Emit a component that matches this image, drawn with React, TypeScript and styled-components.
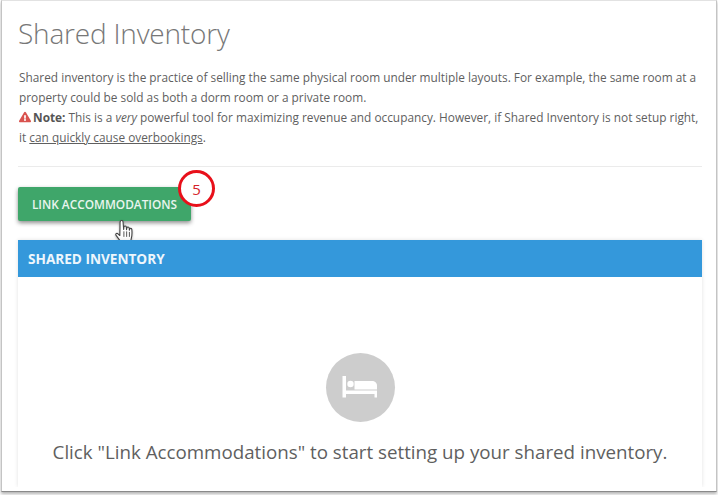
import React from "react";
import styled, { createGlobalStyle } from "styled-components";
import { FaExclamationTriangle } from "react-icons/fa";

const Global = createGlobalStyle`
  html, body { margin: 0; padding: 0; background: #fff; }
  body { font-family: "Open Sans", "Liberation Sans", sans-serif; color: #555; width: 718px; height: 495px; overflow: hidden; }
`;

const Frame = styled.div`
  box-sizing: border-box;
  width: 716px;
  height: 492px;
  margin-left: 1px;
  background: #fff;
  border: 1px solid #c4c4c4;
  border-top-color: #e2e2e2;
  border-bottom: 1px solid #8a8a8a;
  box-shadow: 0 2px 3px rgba(0, 0, 0, 0.3);
  padding: 0 14px 0 16px;
  overflow: hidden;
`;

const Title = styled.h1`
  margin: 11px 0 0 0;
  font-size: 28px;
  line-height: 42px;
  font-weight: 300;
  color: #777;
  letter-spacing: -0.2px;
`;

const Intro = styled.p`
  margin: 13px 0 0 0;
  padding-left: 1px;
  font-size: 11.85px;
  line-height: 20px;
  color: #5f5f5f;
`;

const Warn = styled(FaExclamationTriangle)`
  color: #d9534f;
  font-size: 12px;
  vertical-align: -1px;
  margin-right: 2px;
`;

const Strong = styled.strong`
  font-weight: 700;
  color: #555;
`;

const Underlined = styled.span`
  text-decoration: underline;
`;

const Divider = styled.hr`
  margin: 19px 0 20px 0;
  border: 0;
  border-top: 1px solid #ebebeb;
`;

const ButtonRow = styled.div`
  position: relative;
  height: 34px;
`;

const GreenButton = styled.button`
  box-sizing: border-box;
  width: 173px;
  height: 34px;
  border: 0;
  border-radius: 2px;
  background: #3fa66a;
  color: #e9f5ee;
  font-family: "Open Sans", sans-serif;
  font-size: 11.85px;
  font-weight: 600;
  text-transform: uppercase;
  box-shadow: 0 2px 4px rgba(0, 0, 0, 0.45);
  padding: 0;
`;

const Badge = styled.div`
  position: absolute;
  left: 160px;
  top: -17px;
  box-sizing: border-box;
  width: 37px;
  height: 37px;
  border-radius: 50%;
  border: 3px solid #e8101a;
  background: #fff;
  color: #d5232a;
  font-size: 15px;
  display: flex;
  align-items: center;
  justify-content: center;
`;

const Cursor = styled.svg`
  position: absolute;
  left: 96px;
  top: 32px;
  width: 22px;
  height: 28px;
  filter: drop-shadow(0 1px 1px rgba(0, 0, 0, 0.3));
`;

const Panel = styled.section`
  margin-top: 19px;
  height: 247px;
  box-shadow: 0 0 4px rgba(0, 0, 0, 0.12);
  clip-path: inset(-6px -6px 0 -6px);
`;

const PanelHeader = styled.header`
  box-sizing: border-box;
  height: 37px;
  background: #3498db;
  color: #eef6fc;
  font-size: 13.6px;
  font-weight: 700;
  line-height: 37px;
  padding-left: 10px;
  text-transform: uppercase;
`;

const EmptyState = styled.div`
  display: flex;
  flex-direction: column;
  align-items: center;
  padding-top: 76px;
`;

const IconCircle = styled.div`
  width: 69px;
  height: 69px;
  border-radius: 50%;
  background: #cdcdcd;
  display: flex;
  align-items: center;
  justify-content: center;
`;

const BedIcon = styled.svg`
  width: 36px;
  height: 24px;
  fill: #fff;
`;

const EmptyText = styled.p`
  margin: 17px 0 0 0;
  font-size: 18.74px;
  line-height: 26px;
  color: #5f5f5f;
  white-space: nowrap;
`;

export default function App() {
  return (
    <>
      <Global />
      <Frame>
        <Title>Shared Inventory</Title>
        <Intro>
          Shared inventory is the practice of selling the same physical room under multiple layouts. For example, the same room at a property could be sold as both a dorm room or a private room.
          <br />
          <Warn /><Strong>Note:</Strong> This is a <em>very</em> powerful tool for maximizing revenue and occupancy. However, if Shared Inventory is not setup right, it <Underlined>can quickly cause overbookings</Underlined>.
        </Intro>
        <Divider />
        <ButtonRow>
          <GreenButton>Link Accommodations</GreenButton>
          <Badge>5</Badge>
          <Cursor viewBox="0 0 20 25">
            <path
              d="M6 1.500c1 -.8 2 -.3 2.200 .8l.6 7 .2 -2.200c.2 -1.200 2 -1.200 2.200 0l.2 2.400 .3 -1.700c.3 -1.100 1.900 -1 2.100 .1l.2 2 .3 -1c.4 -1 1.800 -.8 1.900 .3.3 3 .2 6 -.5 8.300l-.8 3.500c-2.500 1.500 -5.500 1.500 -8 .2 -1.600 -1.800 -3 -4 -5 -6.500 -.8 -1 .2 -2.400 1.400 -1.700l2 1.800L5.500 3c0 -.6 .1 -1.100 .5 -1.500z"
              fill="#fff"
              stroke="#444"
              strokeWidth="1"
              strokeLinejoin="round"
            />
            <path d="M9 11v5M11.500 11v5M14 11.500v4.500" stroke="#555" strokeWidth=".9" fill="none" />
          </Cursor>
        </ButtonRow>
        <Panel>
          <PanelHeader>Shared Inventory</PanelHeader>
          <EmptyState>
            <IconCircle>
              <BedIcon viewBox="0 0 36 24">
                <path d="M0.500 0h3.500v14.500h31v7h-2.500v-3.500h-28.500v3.500h-3.500z" />
                <circle cx="8.500" cy="8" r="3.200" />
                <path d="M12.500 5h17.500c2.800 0 5 2 5 4.500v4h-22.500z" />
              </BedIcon>
            </IconCircle>
            <EmptyText>Click "Link Accommodations" to start setting up your shared inventory.</EmptyText>
          </EmptyState>
        </Panel>
      </Frame>
    </>
  );
}
